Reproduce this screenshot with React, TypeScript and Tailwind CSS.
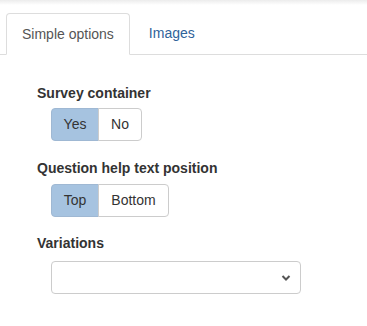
export default function App() {
  return (
    <div className="w-[367px] h-[326px] bg-white font-['Liberation_Sans',Arial,sans-serif] text-[14px] text-[#333] overflow-hidden">
      <div className="h-[5px] bg-gradient-to-b from-[#ececec] to-white" />
      <div className="pt-[8px] pl-[6px] flex border-b border-[#ddd]">
        <div className="-mb-px px-[15px] h-[42px] flex items-center border border-[#ddd] border-b-white rounded-t-[4px] bg-white text-[#555]">
          Simple options
        </div>
        <div className="px-[19px] h-[41px] flex items-center text-[#2f639a]">Images</div>
      </div>
      <div className="pl-[37px] pt-[28px] flex flex-col">
        <label className="font-bold leading-[20px]">Survey container</label>
        <div className="ml-[14px] mt-[5px] flex">
          <button className="h-[33px] w-[48px] rounded-l-[4px] border border-[#9fb8d3] bg-[#a6c3e0] text-[#333]">Yes</button>
          <button className="h-[33px] w-[44px] -ml-px rounded-r-[4px] border border-[#ccc] bg-white text-[#333]">No</button>
        </div>
        <label className="font-bold leading-[20px] mt-[17px]">Question help text position</label>
        <div className="ml-[14px] mt-[6px] flex">
          <button className="h-[33px] w-[48px] rounded-l-[4px] border border-[#9fb8d3] bg-[#a6c3e0] text-[#333]">Top</button>
          <button className="h-[33px] w-[71px] -ml-px rounded-r-[4px] border border-[#ccc] bg-white text-[#333]">Bottom</button>
        </div>
        <label className="font-bold leading-[20px] mt-[16px]">Variations</label>
        <div className="ml-[14px] mt-[8px] relative w-[250px]">
          <select className="appearance-none w-full h-[33px] rounded-[4px] border border-[#ccc] bg-white px-[12px]">
            <option></option>
          </select>
          <svg className="absolute right-[10px] top-[13px] pointer-events-none" width="10" height="8" viewBox="0 0 10 8">
            <path d="M1.5 2 L5 5.5 L8.5 2" fill="none" stroke="#555" strokeWidth="2" />
          </svg>
        </div>
      </div>
    </div>
  );
}
